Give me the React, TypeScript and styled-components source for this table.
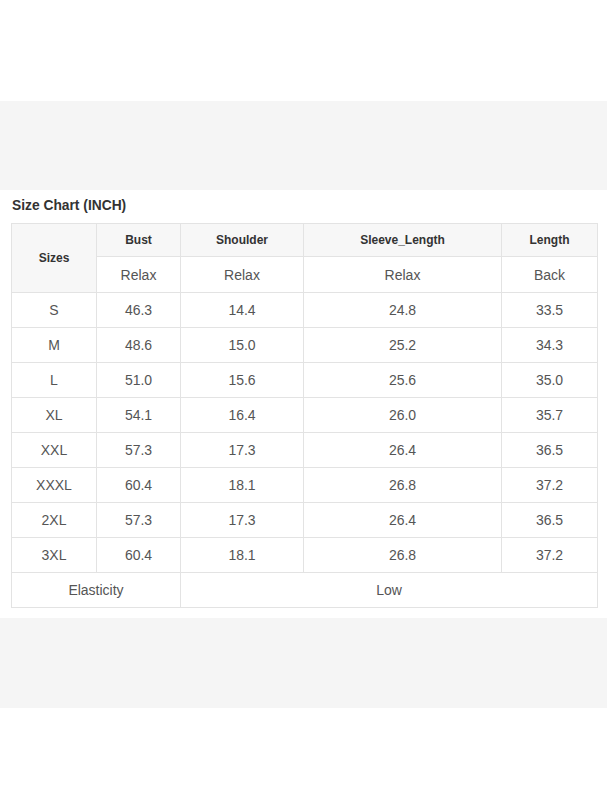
import styled, { createGlobalStyle } from 'styled-components';

const GlobalStyle = createGlobalStyle`
  body {
    margin: 0;
    background: #ffffff;
    font-family: "Liberation Sans", Arial, sans-serif;
  }
`;

interface IBand {
  Height: string;
}

const Spacer = styled.div<IBand>`
  height: ${(props) => props.Height};
  background-color: #ffffff;
`;

const GrayBand = styled.div<IBand>`
  height: ${(props) => props.Height};
  background-color: #f5f5f5;
`;

const ChartSection = styled.section`
  padding: 0 10px 10px 11px;
  background-color: #ffffff;
`;

const Title = styled.h3`
  margin: 0;
  padding: 0 0 0 1px;
  height: 33px;
  line-height: 31px;
  font-size: 13.8px;
  font-weight: 700;
  color: #333333;
`;

const Table = styled.table`
  width: 586px;
  border-collapse: collapse;
  table-layout: fixed;
  color: #555555;
`;

interface ICell {
  Height?: string;
}

const HeadCell = styled.th<ICell>`
  height: ${(props) => props.Height || '32px'};
  padding: 0;
  border: 1px solid #e3e3e3;
  background-color: #f7f7f7;
  font-size: 12px;
  font-weight: 700;
  color: #333333;
  text-align: center;
  vertical-align: middle;
`;

const Cell = styled.td<ICell>`
  height: ${(props) => props.Height || '34px'};
  padding: 0;
  border: 1px solid #e3e3e3;
  background-color: #ffffff;
  font-size: 14px;
  color: #555555;
  text-align: center;
  vertical-align: middle;
`;

const columns = [85, 84, 123, 198, 96];

const rows = [
  ['S', '46.3', '14.4', '24.8', '33.5'],
  ['M', '48.6', '15.0', '25.2', '34.3'],
  ['L', '51.0', '15.6', '25.6', '35.0'],
  ['XL', '54.1', '16.4', '26.0', '35.7'],
  ['XXL', '57.3', '17.3', '26.4', '36.5'],
  ['XXXL', '60.4', '18.1', '26.8', '37.2'],
  ['2XL', '57.3', '17.3', '26.4', '36.5'],
  ['3XL', '60.4', '18.1', '26.8', '37.2'],
];

export function App() {
  return (
    <>
      <GlobalStyle />
      <Spacer Height="101px" />
      <GrayBand Height="89px" />
      <ChartSection>
        <Title>Size Chart (INCH)</Title>
        <Table>
          <colgroup>
            {columns.map((w, i) => (
              <col key={i} style={{ width: `${w}px` }} />
            ))}
          </colgroup>
          <thead>
            <tr>
              <HeadCell rowSpan={2}>Sizes</HeadCell>
              <HeadCell>Bust</HeadCell>
              <HeadCell>Shoulder</HeadCell>
              <HeadCell>Sleeve_Length</HeadCell>
              <HeadCell>Length</HeadCell>
            </tr>
            <tr>
              <Cell Height="35px">Relax</Cell>
              <Cell Height="35px">Relax</Cell>
              <Cell Height="35px">Relax</Cell>
              <Cell Height="35px">Back</Cell>
            </tr>
          </thead>
          <tbody>
            {rows.map((row) => (
              <tr key={row[0]}>
                {row.map((v, i) => (
                  <Cell key={i}>{v}</Cell>
                ))}
              </tr>
            ))}
            <tr>
              <Cell colSpan={2}>Elasticity</Cell>
              <Cell colSpan={3}>Low</Cell>
            </tr>
          </tbody>
        </Table>
      </ChartSection>
      <GrayBand Height="90px" />
      <Spacer Height="101px" />
    </>
  );
}

export default App;
